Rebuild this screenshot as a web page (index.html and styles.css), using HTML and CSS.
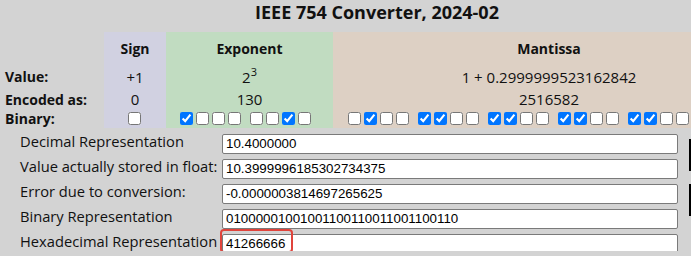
FILE: index.html
```html
<!DOCTYPE html>
<html lang="en">
<head>
    <meta charset="UTF-8">
    <title>IEEE 754 Converter</title>
    <link rel="stylesheet" href="styles.css">
</head>
<body>
    <div class="page">
        <h1 class="title">IEEE 754 Converter, 2024-02</h1>

        <div class="bits">
            <div class="label"></div>
            <div class="cell sign head">Sign</div>
            <div class="cell exponent head">Exponent</div>
            <div class="cell mantissa head">Mantissa</div>

            <div class="label">Value:</div>
            <div class="cell sign">+1</div>
            <div class="cell exponent"><span>2<sup>3</sup></span></div>
            <div class="cell mantissa">1 + 0.2999999523162842</div>

            <div class="label">Encoded as:</div>
            <div class="cell sign">0</div>
            <div class="cell exponent">130</div>
            <div class="cell mantissa">2516582</div>

            <div class="label">Binary:</div>
            <div class="cell sign boxes"><input type="checkbox"></div>
            <div class="cell exponent boxes">
                <span class="group"><input type="checkbox" checked><input type="checkbox"><input type="checkbox"><input type="checkbox"></span>
                <span class="group"><input type="checkbox"><input type="checkbox"><input type="checkbox" checked><input type="checkbox"></span>
            </div>
            <div class="cell mantissa boxes">
                <span class="group"><input type="checkbox"><input type="checkbox" checked><input type="checkbox"><input type="checkbox"></span>
                <span class="group"><input type="checkbox" checked><input type="checkbox" checked><input type="checkbox"><input type="checkbox"></span>
                <span class="group"><input type="checkbox" checked><input type="checkbox" checked><input type="checkbox"><input type="checkbox"></span>
                <span class="group"><input type="checkbox" checked><input type="checkbox" checked><input type="checkbox"><input type="checkbox"></span>
                <span class="group"><input type="checkbox" checked><input type="checkbox" checked><input type="checkbox"><input type="checkbox"></span>
                <span class="group"><input type="checkbox" checked><input type="checkbox" checked><input type="checkbox"></span>
            </div>
        </div>

        <div class="form">
            <label class="field-label">Decimal Representation</label>
            <div class="field"><input type="text" value="10.4000000"></div>
            <div class="side side-top"></div>

            <label class="field-label">Value actually stored in float:</label>
            <div class="field"><input type="text" value="10.3999996185302734375"></div>

            <label class="field-label">Error due to conversion:</label>
            <div class="field"><input type="text" value="-0.0000003814697265625"></div>
            <div class="side side-bottom"></div>

            <label class="field-label">Binary Representation</label>
            <div class="field"><input type="text" value="01000001001001100110011001100110"></div>

            <label class="field-label">Hexadecimal Representation</label>
            <div class="field"><input type="text" value="41266666"><span class="mark"></span></div>
        </div>
    </div>
</body>
</html>
```

FILE: styles.css
```css
* {
    margin: 0;
    padding: 0;
    box-sizing: border-box;
}

html {
    overflow: hidden;
}

body {
    background: #d3d3d3;
    font-family: 'Open Sans', 'Noto Sans', sans-serif;
    color: #111;
}

.page {
    width: 765px;
}

.title {
    width: 754px;
    text-align: center;
    font-size: 18px;
    font-weight: bold;
    line-height: 24px;
    height: 32px;
}

.bits {
    display: grid;
    grid-template-columns: 104px 62px 167px 432px;
    grid-template-rows: 32px 25px 20px 19px;
    font-size: 15px;
}

.label {
    font-weight: bold;
    font-size: 14px;
    padding-left: 5px;
    display: flex;
    align-items: center;
}

.cell {
    display: flex;
    align-items: center;
    justify-content: center;
}

.head {
    font-weight: bold;
    font-size: 14px;
}

.sign { background: #d1d1e1; }
.exponent { background: #c1dcc1; }
.mantissa { background: #ddd0c4; }

.cell sup {
    font-size: 11px;
    vertical-align: 7px;
    line-height: 1;
}

.boxes {
    align-items: flex-start;
    padding-top: 3px;
    padding-right: 2px;
}

.boxes input {
    width: 13px;
    height: 13px;
    margin: 0 1.5px;
}

.group {
    display: flex;
    margin-right: 6px;
}

.form {
    display: grid;
    grid-template-columns: 202px 456px 13px;
    grid-auto-rows: 20px;
    row-gap: 5px;
    padding: 3px 0 0 20px;
}

.field-label {
    grid-column: 1;
    font-size: 14.7px;
    display: flex;
    align-items: center;
    white-space: nowrap;
}

.field {
    grid-column: 2;
    position: relative;
}

.field input {
    width: 100%;
    height: 20px;
    border: 1px solid #7a7a7a;
    border-radius: 2px;
    background: #fff;
    padding: 0 3px;
    font-family: 'Liberation Sans', Arial, sans-serif;
    font-size: 13.33px;
    color: #000;
}

.mark {
    position: absolute;
    left: -2px;
    top: -2px;
    width: 73px;
    height: 24px;
    border: 2px solid #e0443c;
    border-radius: 4px;
}

.side {
    grid-column: 3;
    justify-self: end;
    width: 2px;
    height: 32px;
    background: #000;
}

.side-top {
    grid-row: 1 / span 2;
    margin-top: 8px;
}

.side-bottom {
    grid-row: 3 / span 2;
    margin-top: 3px;
}
```
